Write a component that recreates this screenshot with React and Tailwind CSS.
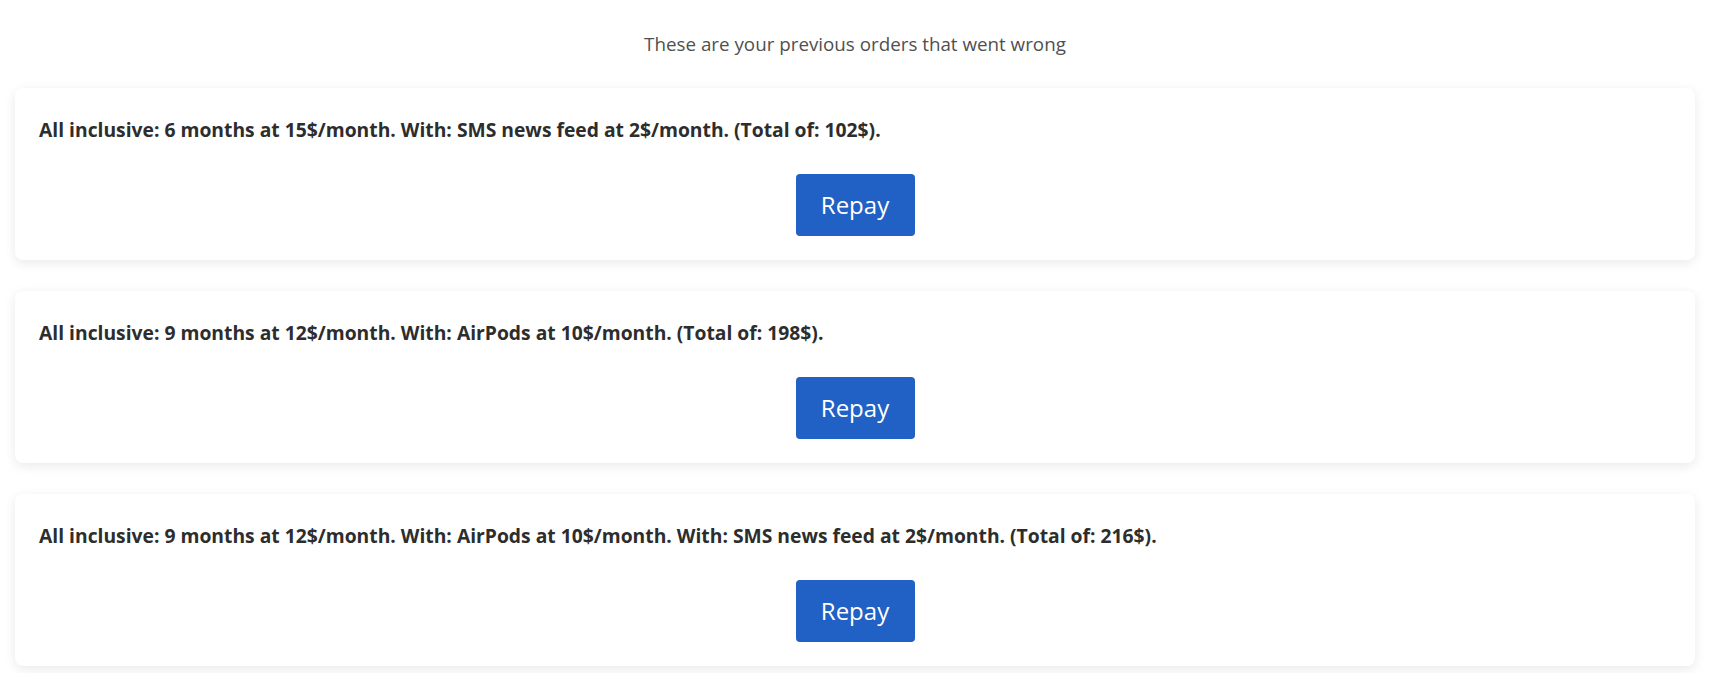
import React from "react";

const orders = [
  "All inclusive: 6 months at 15$/month. With: SMS news feed at 2$/month. (Total of: 102$).",
  "All inclusive: 9 months at 12$/month. With: AirPods at 10$/month. (Total of: 198$).",
  "All inclusive: 9 months at 12$/month. With: AirPods at 10$/month. With: SMS news feed at 2$/month. (Total of: 216$).",
];

export default function App() {
  return (
    <div className="min-h-screen bg-white pl-[15px] pr-[21px] pt-[30px] pb-[8px]" style={{ fontFamily: '"Open Sans", "Noto Sans", sans-serif' }}>
      <p className="text-center text-[18.8px] leading-[28px] text-[#505050]">
        These are your previous orders that went wrong
      </p>
      <div className="mt-[30px] flex flex-col gap-[31px]">
        {orders.map((o, i) => (
          <div
            key={i}
            className="h-[172px] rounded-lg bg-white px-[24px] pt-[28px] shadow-[0_3px_12px_rgba(0,0,0,0.09)]"
          >
            <p className="text-[19.3px] font-bold leading-[28px] text-[#2d2d2d]">{o}</p>
            <div className="mt-[30px] flex justify-center">
              <button className="h-[62px] w-[119px] rounded-[4px] bg-[#2160c4] text-[24px] text-white">
                Repay
              </button>
            </div>
          </div>
        ))}
      </div>
    </div>
  );
}
